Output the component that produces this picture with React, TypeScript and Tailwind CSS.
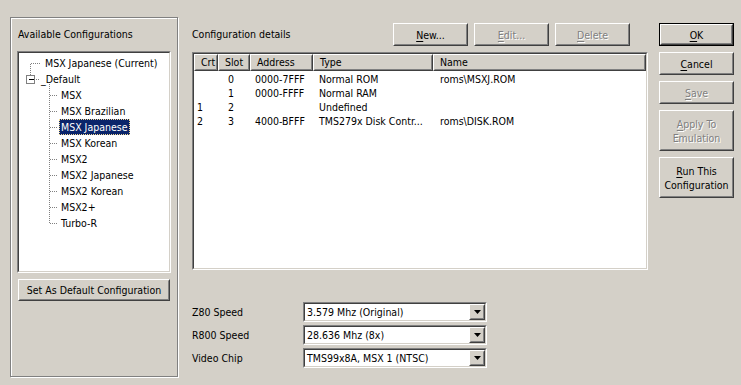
import React from "react";

const raisedOuter =
  "border border-t-white border-l-white border-r-[#404040] border-b-[#404040]";
const raisedInner = "border border-t-[#d4d0c8] border-l-[#d4d0c8] border-r-[#808080] border-b-[#808080]";
const sunkOuter = "border border-t-[#808080] border-l-[#808080] border-r-white border-b-white";
const sunkInner = "border border-t-[#404040] border-l-[#404040] border-r-[#d4d0c8] border-b-[#d4d0c8]";
const greyText = "text-[#808080] [text-shadow:1px_1px_0_#ffffff]";

const Key = ({ children }: { children: React.ReactNode }) => (
  <span className="underline decoration-1 underline-offset-[2px]">{children}</span>
);

const Btn = ({
  children,
  className = "",
  disabled = false,
  isDefault = false,
}: {
  children: React.ReactNode;
  className?: string;
  disabled?: boolean;
  isDefault?: boolean;
}) => {
  const body = (
    <div className={`${raisedOuter} h-full w-full bg-[#d4d0c8]`}>
      <div
        className={`${raisedInner} flex h-full w-full flex-col items-center justify-center text-center leading-[14px] ${disabled ? greyText : "text-black"}`}
      >
        {children}
      </div>
    </div>
  );
  if (isDefault) {
    return <div className={`border border-black ${className}`}>{body}</div>;
  }
  return <div className={className}>{body}</div>;
};

const Sunken = ({ children, className = "" }: { children: React.ReactNode; className?: string }) => (
  <div className={`${sunkOuter} ${className}`}>
    <div className={`${sunkInner} h-full w-full bg-white`}>{children}</div>
  </div>
);

const treeItems = [
  { text: "MSX Japanese (Current)", pad: "pl-[24px]" },
  { text: "_Default", pad: "pl-[20px]" },
  { text: "MSX", pad: "pl-[40px]" },
  { text: "MSX Brazilian", pad: "pl-[40px]" },
  { text: "MSX Japanese", pad: "pl-[40px]", selected: true },
  { text: "MSX Korean", pad: "pl-[40px]" },
  { text: "MSX2", pad: "pl-[40px]" },
  { text: "MSX2 Japanese", pad: "pl-[40px]" },
  { text: "MSX2 Korean", pad: "pl-[40px]" },
  { text: "MSX2+", pad: "pl-[40px]" },
  { text: "Turbo-R", pad: "pl-[40px]" },
];

const columns = [
  { title: "Crt", w: "w-[24px]" },
  { title: "Slot", w: "w-[32px]" },
  { title: "Address", w: "w-[63px]" },
  { title: "Type", w: "w-[120px]" },
  { title: "Name", w: "flex-1" },
];

const rows = [
  ["", " 0", "0000-7FFF", "Normal ROM", "roms\\MSXJ.ROM"],
  ["", " 1", "0000-FFFF", "Normal RAM", ""],
  ["1", " 2", "", "Undefined", ""],
  ["2", " 3", "4000-BFFF", "TMS279x Disk Contr...", "roms\\DISK.ROM"],
];

const combos = [
  { label: "Z80 Speed", value: "3.579 Mhz (Original)" },
  { label: "R800 Speed", value: "28.636 Mhz (8x)" },
  { label: "Video Chip", value: "TMS99x8A, MSX 1 (NTSC)" },
];

const TreeLines = () => {
  const dots = { stroke: "#808080", strokeWidth: 1, strokeDasharray: "1 1", shapeRendering: "crispEdges" as const };
  return (
    <svg className="pointer-events-none absolute left-0 top-0" width="150" height="216">
      <line x1="11.5" y1="10.5" x2="22" y2="10.5" {...dots} />
      <line x1="11.5" y1="11" x2="11.5" y2="22" {...dots} />
      <rect x="7.5" y="22.5" width="8" height="8" fill="#fff" stroke="#808080" shapeRendering="crispEdges" />
      <line x1="10" y1="26.5" x2="15" y2="26.5" stroke="#000" shapeRendering="crispEdges" />
      <line x1="17" y1="26.5" x2="21" y2="26.5" {...dots} />
      <line x1="30.5" y1="31" x2="30.5" y2="170" {...dots} />
      {[2, 3, 4, 5, 6, 7, 8, 9, 10].map((i) => (
        <line key={i} x1="31" y1={10.5 + 16 * i} x2="39" y2={10.5 + 16 * i} {...dots} />
      ))}
    </svg>
  );
};

export default function App() {
  return (
    <div className="flex h-[385px] w-[741px] items-start overflow-hidden bg-[#d4d0c8] font-['Tahoma','DejaVu_Sans_Condensed','Liberation_Sans',sans-serif] text-[10.5px] leading-[13px] text-black">
      {/* left group */}
      <div className="ml-[10px] mt-[17px] h-[360px] w-[168px] border border-[#808080] shadow-[inset_1px_1px_0_#ffffff,1px_1px_0_#ffffff]">
        <div className="ml-[7px] mt-[10px] h-[13px]">Available Configurations</div>
        <Sunken className="ml-[6px] mt-[10px] h-[222px] w-[154px]">
          <div className="relative h-full w-full pt-[2px]">
            <TreeLines />
            {treeItems.map((item) => (
              <div key={item.text} className={`flex h-[16px] items-center ${item.pad}`}>
                <span
                  className={`flex h-[16px] items-center px-[2px] ${item.selected ? "bg-[#0a246a] text-white outline-1 -outline-offset-1 outline-dotted outline-[#f5db95]" : ""}`}
                >
                  {item.text}
                </span>
              </div>
            ))}
          </div>
        </Sunken>
        <Btn className="ml-[7px] mt-[6px] h-[22px] w-[152px]">Set As Default Configuration</Btn>
      </div>

      {/* middle */}
      <div className="ml-[14px] mt-[23px] flex w-[456px] flex-col">
        <div className="flex h-[23px] items-center">
          <span className="mt-[-1px]">Configuration details</span>
          <div className="ml-auto mr-[18px] flex gap-[6px]">
            <Btn className="h-[23px] w-[75px]">
              <span>
                <Key>N</Key>ew...
              </span>
            </Btn>
            <Btn className="h-[23px] w-[75px]" disabled>
              <span>
                <Key>E</Key>dit...
              </span>
            </Btn>
            <Btn className="h-[23px] w-[75px]" disabled>
              <span>
                <Key>D</Key>elete
              </span>
            </Btn>
          </div>
        </div>

        <Sunken className="mt-[6px] h-[218px] w-[456px]">
          <div className="flex h-[17px] bg-[#d4d0c8]">
            {columns.map((c) => (
              <div key={c.title} className={`${c.w} ${raisedOuter} h-full`}>
                <div className={`${raisedInner} flex h-full items-center pl-[5px]`}>{c.title}</div>
              </div>
            ))}
          </div>
          <div className="pt-[1px]">
            {rows.map((r, i) => (
              <div key={i} className="flex h-[14px] items-center whitespace-pre">
                <div className="w-[24px] pl-[3px]">{r[0]}</div>
                <div className="w-[32px] pl-[7px]">{r[1]}</div>
                <div className="w-[63px] pl-[5px]">{r[2]}</div>
                <div className="w-[120px] pl-[6px]">{r[3]}</div>
                <div className="flex-1 pl-[7px]">{r[4]}</div>
              </div>
            ))}
          </div>
        </Sunken>

        <div className="mt-[32px] flex flex-col gap-[3px]">
          {combos.map((c) => (
            <div key={c.label} className="flex h-[20px] items-center">
              <span className="w-[111px]">{c.label}</span>
              <Sunken className="h-[20px] w-[184px]">
                <div className="flex h-full items-center">
                  <span className="flex-1 pl-[2px]">{c.value}</span>
                  <div className={`${raisedOuter} h-full w-[16px] bg-[#d4d0c8]`}>
                    <div className={`${raisedInner} flex h-full items-center justify-center`}>
                      <svg width="7" height="4" viewBox="0 0 7 4">
                        <path d="M0 0h7L3.5 4z" fill="#000" />
                      </svg>
                    </div>
                  </div>
                </div>
              </Sunken>
            </div>
          ))}
        </div>
      </div>

      {/* right buttons */}
      <div className="ml-[11px] mt-[23px] flex w-[75px] flex-col gap-[6px]">
        <Btn className="h-[23px] w-[75px]" isDefault>
          <span>
            <Key>O</Key>K
          </span>
        </Btn>
        <Btn className="h-[23px] w-[75px]">
          <span>
            <Key>C</Key>ancel
          </span>
        </Btn>
        <Btn className="h-[23px] w-[75px]" disabled>
          <span>
            <Key>S</Key>ave
          </span>
        </Btn>
        <Btn className="h-[41px] w-[75px]" disabled>
          <span>
            <Key>A</Key>pply To
          </span>
          <span>Emulation</span>
        </Btn>
        <Btn className="h-[41px] w-[75px]">
          <span>
            <Key>R</Key>un This
          </span>
          <span>Configuration</span>
        </Btn>
      </div>
    </div>
  );
}
